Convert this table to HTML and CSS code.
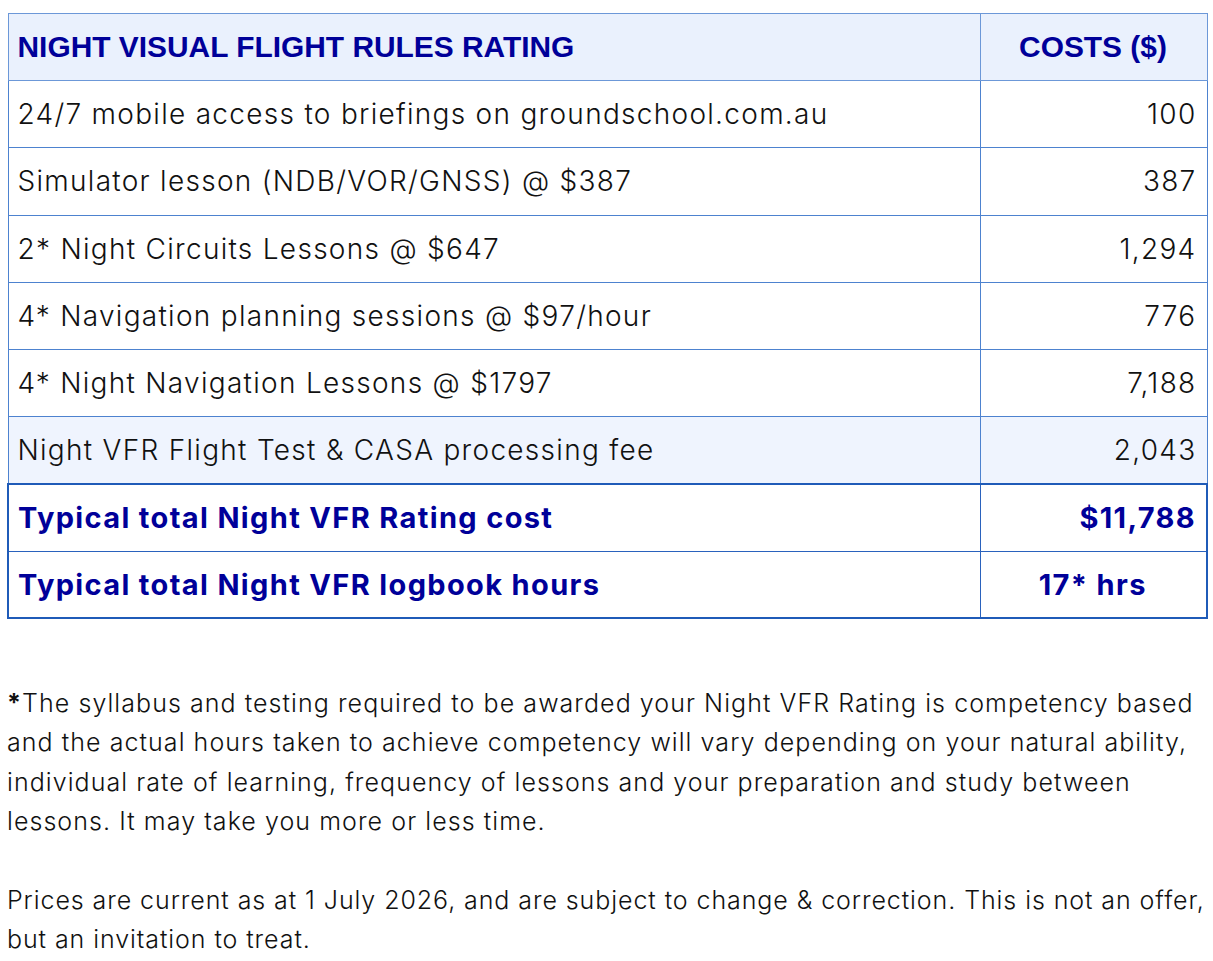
FILE: index.html
```html
<!DOCTYPE html>
<html>
<head>
<meta charset="utf-8">
<link rel="stylesheet" href="styles.css">
</head>
<body>
<table class="rates">
  <thead>
    <tr class="head">
      <th class="label">NIGHT VISUAL FLIGHT RULES RATING</th>
      <th class="cost">COSTS ($)</th>
    </tr>
  </thead>
  <tbody>
    <tr><td class="label">24/7 mobile access to briefings on groundschool.com.au</td><td class="num">100</td></tr>
    <tr><td class="label">Simulator lesson (NDB/VOR/GNSS) @ $387</td><td class="num">387</td></tr>
    <tr><td class="label">2* Night Circuits Lessons @ $647</td><td class="num">1,294</td></tr>
    <tr><td class="label">4* Navigation planning sessions @ $97/hour</td><td class="num">776</td></tr>
    <tr><td class="label">4* Night Navigation Lessons @ $1797</td><td class="num">7,188</td></tr>
    <tr class="shade"><td class="label">Night VFR Flight Test &amp; CASA processing fee</td><td class="num">2,043</td></tr>
    <tr class="total first"><td class="label">Typical total Night VFR Rating cost</td><td class="num">$11,788</td></tr>
    <tr class="total last"><td class="label">Typical total Night VFR logbook hours</td><td class="mid">17* hrs</td></tr>
  </tbody>
</table>
<div class="notes">
  <p class="basis"><strong>*</strong>The syllabus and testing required to be awarded your Night VFR Rating is competency based and the actual hours taken to achieve competency will vary depending on your natural ability, individual rate of learning, frequency of lessons and your preparation and study between lessons. It may take you more or less time.</p>
  <p class="legal">Prices are current as at 1 July 2026, and are subject to change &amp; correction. This is not an offer, but an invitation to treat.</p>
</div>
</body>
</html>
```

FILE: styles.css
```css
html, body {
  margin: 0;
  padding: 0;
  background: #ffffff;
}
body {
  padding: 13px 0 0 7px;
  font-family: Inter, "Noto Sans", sans-serif;
  color: #111111;
}
.rates {
  width: 1199px;
  border-collapse: collapse;
  table-layout: fixed;
}
.rates th, .rates td {
  border: 1px solid #4d82cf;
  height: 67.2px;
  padding: 0 10px 0 9px;
  box-sizing: border-box;
  font-size: 28px;
  vertical-align: middle;
}
.rates .label { width: 972px; text-align: left; }
.rates th.cost, .rates td.num, .rates td.mid { width: 227px; }
.head th {
  background: #eaf1fd;
  color: #000099;
  font-family: "Liberation Sans", Arial, sans-serif;
  font-weight: 700;
  font-size: 29.9px;
  border-color: #6c98d8;
}
.head th.cost { text-align: center; }
.rates td {
  font-weight: 350;
  color: #111;
  letter-spacing: 1.29px;
}
.rates td.num { text-align: right; }
.rates td.mid { text-align: center; }
.shade td { background: #eff4fe; }
.total td {
  color: #000099;
  font-weight: 700;
  font-size: 29px;
  letter-spacing: 1.35px;
  border-color: #2a62bd;
}
.total td:first-child { border-left: 2px solid #1f5bb8; }
.total td:last-child { border-right: 2px solid #1f5bb8; }
.total.first td { border-top: 2px solid #1f5bb8; }
.total.last td { border-bottom: 2px solid #1f5bb8; }
.notes {
  width: 1206px;
  margin-top: 65px;
  font-size: 25px;
  font-weight: 350;
  line-height: 39.3px;
  color: #111;
}
.notes p { margin: 0 0 39.3px 0; }
.notes strong { font-weight: 700; }
.notes .basis { letter-spacing: 1.06px; }
.notes .legal { letter-spacing: 0.92px; }
```
